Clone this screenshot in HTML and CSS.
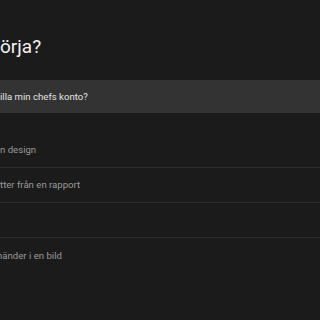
FILE: index.html
```html
<!DOCTYPE html>
<html>
  <head>
    <title>Hjälp</title>
    <link rel="stylesheet" href="styles.css">
  </head>
  <body>
    <div id="content">
      <h1 class="title">örja?</h1>
      <p class="featured">illa min chefs konto?</p>
      <ul class="items">
        <li class="item">n design</li>
        <li class="item">tter från en rapport</li>
        <li class="item"></li>
        <li class="item cut">händer i en bild</li>
      </ul>
    </div>
  </body>
</html>
```

FILE: styles.css
```css
html, body {
  margin: 0;
  height: 100%;
  overflow: hidden;
}

body {
  background-color: #1b1b1b;
  font-family: Roboto, "Liberation Sans", sans-serif;
}

#content {
  padding-top: 35px;
}

.title {
  margin: 0;
  font-size: 19px;
  line-height: 24px;
  font-weight: 400;
  color: #f2f2f2;
}

.featured {
  margin: 21px 0 0 0;
  height: 33px;
  line-height: 33px;
  font-size: 9.6px;
  color: #e4e4e4;
  background-color: #333333;
  white-space: nowrap;
}

.items {
  list-style: none;
  margin: 20px 0 0 0;
  padding: 0;
}

.item {
  height: 34px;
  line-height: 34px;
  font-size: 9.6px;
  color: #9a9a9a;
  border-bottom: 1px solid #2b2b2b;
  white-space: nowrap;
}

.item:last-child {
  border-bottom: none;
  line-height: 36px;
}

.cut {
  text-indent: -3px;
}
```
